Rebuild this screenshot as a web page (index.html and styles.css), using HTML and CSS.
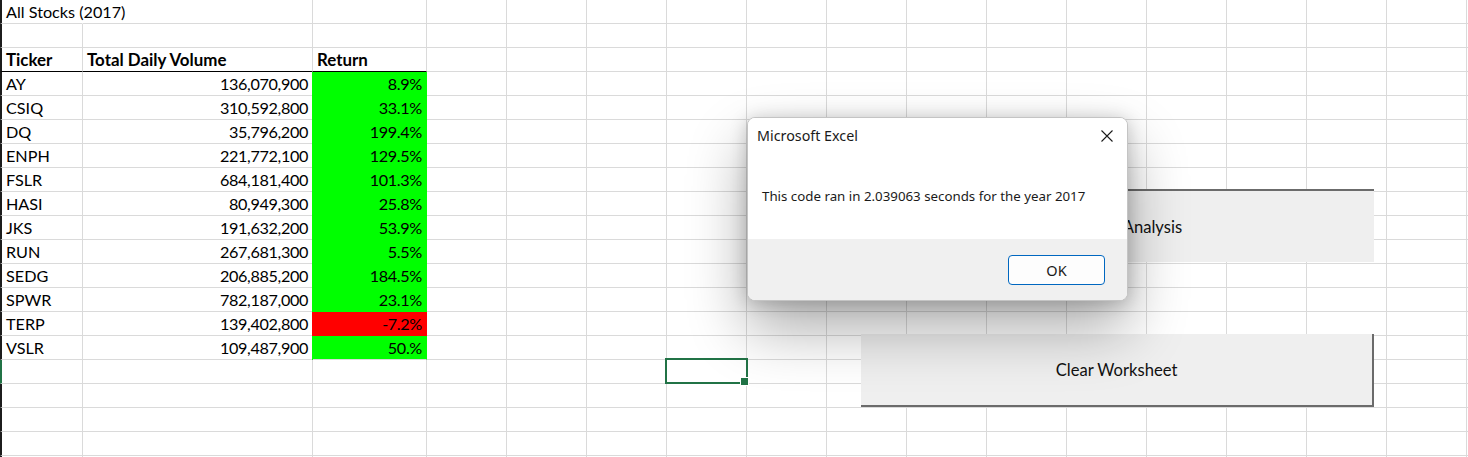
FILE: index.html
```html
<!DOCTYPE html>
<html lang="en">
<head>
<meta charset="utf-8">
<title>All Stocks (2017)</title>
<link rel="stylesheet" href="styles.css">
</head>
<body>
<main class="sheet">
  <div class="cell col-a title">All Stocks (2017)</div><div class="cell col-b"></div><div class="cell col-c"></div>
  <div class="cell col-a"></div><div class="cell col-b"></div><div class="cell col-c"></div>
  <div class="cell col-a hdr">Ticker</div><div class="cell col-b hdr">Total Daily Volume</div><div class="cell col-c hdr">Return</div>
  <div class="cell col-a">AY</div><div class="cell col-b num">136,070,900</div><div class="cell col-c num pos">8.9%</div>
  <div class="cell col-a">CSIQ</div><div class="cell col-b num">310,592,800</div><div class="cell col-c num pos">33.1%</div>
  <div class="cell col-a">DQ</div><div class="cell col-b num">35,796,200</div><div class="cell col-c num pos">199.4%</div>
  <div class="cell col-a">ENPH</div><div class="cell col-b num">221,772,100</div><div class="cell col-c num pos">129.5%</div>
  <div class="cell col-a">FSLR</div><div class="cell col-b num">684,181,400</div><div class="cell col-c num pos">101.3%</div>
  <div class="cell col-a">HASI</div><div class="cell col-b num">80,949,300</div><div class="cell col-c num pos">25.8%</div>
  <div class="cell col-a">JKS</div><div class="cell col-b num">191,632,200</div><div class="cell col-c num pos">53.9%</div>
  <div class="cell col-a">RUN</div><div class="cell col-b num">267,681,300</div><div class="cell col-c num pos">5.5%</div>
  <div class="cell col-a">SEDG</div><div class="cell col-b num">206,885,200</div><div class="cell col-c num pos">184.5%</div>
  <div class="cell col-a">SPWR</div><div class="cell col-b num">782,187,000</div><div class="cell col-c num pos">23.1%</div>
  <div class="cell col-a">TERP</div><div class="cell col-b num">139,402,800</div><div class="cell col-c num neg">-7.2%</div>
  <div class="cell col-a">VSLR</div><div class="cell col-b num">109,487,900</div><div class="cell col-c num pos end">50.%</div>
  <div class="cell col-a active-row"></div><div class="cell col-b"></div><div class="cell col-c"></div>
  <div class="cell col-a"></div><div class="cell col-b"></div><div class="cell col-c"></div>
  <div class="cell col-a"></div><div class="cell col-b"></div><div class="cell col-c"></div>
  <div class="cell col-a"></div><div class="cell col-b"></div><div class="cell col-c"></div>
  <div class="cell col-a"></div><div class="cell col-b"></div><div class="cell col-c"></div>
  <div class="rest">
    <div class="selection"></div>
  </div>
</main>

<button class="form-btn btn-run" type="button">Run Stock Analysis</button>
<button class="form-btn btn-clear" type="button">Clear Worksheet</button>

<div class="dialog" role="dialog" aria-label="Microsoft Excel">
  <div class="dialog-body">
    <div class="dialog-bar">
      <span class="dialog-title">Microsoft Excel</span>
      <button class="dialog-close" type="button" aria-label="Close">
        <svg width="12" height="12" viewBox="0 0 12 12"><path d="M0.5 0.5L11.5 11.5M11.5 0.5L0.5 11.5" stroke="#1b1b1b" stroke-width="1.1" fill="none"/></svg>
      </button>
    </div>
    <p class="dialog-msg">This code ran in 2.039063 seconds for the year 2017</p>
  </div>
  <div class="dialog-footer">
    <button class="ok" type="button">OK</button>
  </div>
</div>
</body>
</html>
```
FILE: styles.css
```css
* { box-sizing: border-box; }

html, body {
  margin: 0;
  padding: 0;
}

body {
  width: 1468px;
  height: 457px;
  overflow: hidden;
  position: relative;
  background: #ffffff;
  color: #000000;
  font-family: Lato, "Liberation Sans", sans-serif;
}

/* ---------- worksheet ---------- */
.sheet {
  display: grid;
  grid-template-columns: 83px 230px 114px 1fr;
  grid-template-rows: repeat(20, 24px);
  height: 457px;
  overflow: hidden;
  font-size: 16.2px;
}

.cell {
  border-right: 1px solid #dadada;
  border-bottom: 1px solid #dadada;
  line-height: 23px;
  padding: 0 4px;
  white-space: nowrap;
}

.col-a {
  border-left: 2px solid #1c1c1c;
  padding-left: 4px;
}

.active-row { border-left-color: #217346; }

.title { border-right-color: transparent; }

.hdr {
  font-weight: 700;
  font-size: 16.9px;
  border-bottom-color: #000000;
}

.num {
  text-align: right;
  letter-spacing: -0.35px;
}

.pos {
  background: #00ff00;
  border-right-color: #00ff00;
  border-bottom-color: #00ff00;
  box-shadow: -1px 0 0 #00ff00;
}

.neg {
  background: #ff0000;
  border-right-color: #ff0000;
  border-bottom-color: #ff0000;
  box-shadow: -1px 0 0 #ff0000;
}

.pos.end { border-bottom-color: #dadada; }

.rest {
  grid-column: 4;
  grid-row: 1 / -1;
  position: relative;
  background-image:
    linear-gradient(to left, #dadada 1px, transparent 1px),
    linear-gradient(to top, #dadada 1px, transparent 1px);
  background-size: 80px 24px;
}

.selection {
  position: absolute;
  left: 238px;
  top: 358px;
  width: 83px;
  height: 26px;
  border: 2px solid #217346;
}

.selection::after {
  content: "";
  position: absolute;
  right: -3px;
  bottom: -4px;
  width: 7px;
  height: 7px;
  background: #217346;
  border: 1px solid #ffffff;
}

/* ---------- form buttons on the sheet ---------- */
.form-btn {
  position: absolute;
  left: 861px;
  width: 513px;
  margin: 0;
  padding: 0;
  border: 0;
  background: #efefef;
  color: #111111;
  font-family: Lato, "Liberation Sans", sans-serif;
  font-size: 16.6px;
  text-align: center;
}

.btn-run {
  top: 189px;
  height: 73px;
  padding-right: 7px;
  border-top: 2px solid #6b6b6b;
}

.btn-clear {
  top: 334px;
  height: 73px;
  border-right: 2px solid #6b6b6b;
  border-bottom: 2px solid #6b6b6b;
}

/* ---------- message box ---------- */
.dialog {
  position: absolute;
  left: 747px;
  top: 117px;
  width: 381px;
  height: 184px;
  display: flex;
  flex-direction: column;
  border: 1px solid #c4c4c4;
  border-radius: 8px;
  overflow: hidden;
  background: #ffffff;
  box-shadow: 0 28px 60px rgba(0, 0, 0, 0.33), 0 2px 18px rgba(0, 0, 0, 0.2);
  font-family: "Noto Sans", "Open Sans", sans-serif;
  color: #1a1a1a;
}

.dialog-body {
  flex: 1;
  background: #ffffff;
}

.dialog-bar {
  height: 36px;
  display: flex;
  align-items: center;
  justify-content: space-between;
  padding: 0 14px 0 9px;
}

.dialog-title {
  font-size: 14.3px;
  line-height: 20px;
  padding-bottom: 1px;
}

.dialog-close {
  display: flex;
  width: 12px;
  height: 12px;
  padding: 0;
  border: 0;
  background: none;
}

.dialog-msg {
  margin: 33px 0 0 14px;
  font-size: 13.3px;
  line-height: 18px;
}

.dialog-footer {
  height: 61px;
  display: flex;
  justify-content: flex-end;
  align-items: flex-start;
  padding: 16px 22px 0 0;
  background: #f0f0f0;
}

.ok {
  width: 97px;
  height: 30px;
  margin: 0;
  padding: 0;
  border: 1px solid #0067c0;
  border-radius: 4px;
  background: #fdfdfd;
  color: #1a1a1a;
  font-family: "Noto Sans", "Open Sans", sans-serif;
  font-size: 14.5px;
}
```
